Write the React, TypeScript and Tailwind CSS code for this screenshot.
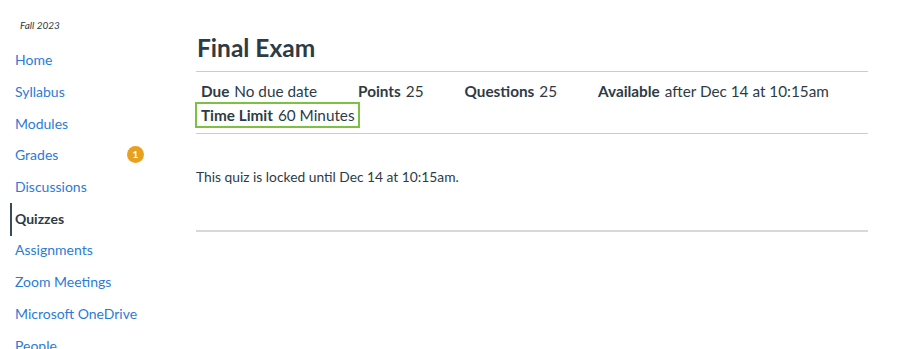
const navItems = [
  { label: 'Home' },
  { label: 'Syllabus' },
  { label: 'Modules' },
  { label: 'Grades', badge: 1 },
  { label: 'Discussions' },
  { label: 'Quizzes', active: true },
  { label: 'Assignments' },
  { label: 'Zoom Meetings' },
  { label: 'Microsoft OneDrive' },
  { label: 'People' },
];

const details = [
  { label: 'Due', value: 'No due date' },
  { label: 'Points', value: '25' },
  { label: 'Questions', value: '25' },
  { label: 'Available', value: 'after Dec 14 at 10:15am' },
  { label: 'Time Limit', value: '60 Minutes', highlight: true },
];

export default function App() {
  return (
    <div className="h-[349px] overflow-hidden bg-white flex font-['Lato','Liberation_Sans',sans-serif] text-[#2d3b45]">
      {/* Course nav */}
      <nav className="w-[196px] shrink-0 pt-[18px]">
        <p className="pl-[20px] text-[10px] italic leading-[14px] text-[#2d3b45]">Fall 2023</p>
        <ul className="mt-[12px]">
          {navItems.map((item) => (
            <li key={item.label} className="relative h-[31.7px] flex items-center">
              {item.active && <span className="absolute left-[10px] top-[1px] bottom-[-2px] w-[2px] bg-[#394b58]" />}
              <a
                href="#"
                className={
                  item.active
                    ? 'pl-[15px] text-[14px] font-bold text-[#2d3b45]'
                    : 'pl-[15px] text-[14px] text-[#2b7bd6]'
                }
              >
                {item.label}
              </a>
              {item.badge && (
                <span className="ml-auto mr-[52px] w-[17px] h-[17px] rounded-full bg-[#e8a020] text-white text-[10px] font-bold flex items-center justify-center">
                  {item.badge}
                </span>
              )}
            </li>
          ))}
        </ul>
      </nav>

      {/* Quiz content */}
      <main className="flex-1 pr-[32px] pt-[33px]">
        <h1 className="text-[24.5px] font-bold leading-[30px] pl-[1px] text-[#2d3b45]">Final Exam</h1>
        <div className="mt-[8px] border-t border-[#c7cdd1]" />
        <div className="flex flex-wrap pt-[7px] pb-[6px] text-[15.3px] leading-[24px]">
          {details.map((d) => (
            <div
              key={d.label}
              className={
                d.highlight
                  ? 'pl-[5px] pr-[4px] mr-[32px] outline-2 outline-[#7dc142] -outline-offset-1'
                  : 'pl-[5px] pr-[4px] mr-[32px]'
              }
            >
              <span className="font-bold mr-[5px]">{d.label}</span>
              <span>{d.value}</span>
            </div>
          ))}
        </div>
        <div className="border-t border-[#c7cdd1]" />
        <p className="mt-[33px] text-[13.8px] leading-[20px]">This quiz is locked until Dec 14 at 10:15am.</p>
        <div className="mt-[43px] border-t-2 border-[#d5d9dc]" />
      </main>
    </div>
  );
}
